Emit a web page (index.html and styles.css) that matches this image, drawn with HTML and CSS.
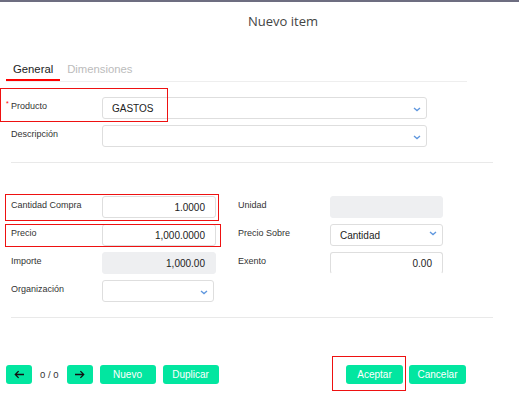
FILE: index.html
```html
<!DOCTYPE html>
<html lang="es">
<head>
<meta charset="utf-8">
<title>Nuevo item</title>
<link rel="stylesheet" href="styles.css">
</head>
<body>
<div class="modal">
  <div class="header"><span class="title">Nuevo item</span></div>

  <div class="tabs">
    <div class="tab active">General</div>
    <div class="tab">Dimensiones</div>
  </div>

  <div class="section top">
    <div class="row">
      <div class="label"><span class="req">*</span>Producto</div>
      <div class="input wide select"><span class="val">GASTOS</span>
        <svg class="chev" viewBox="0 0 8 5"><path d="M1 1 L4 3.6 L7 1" fill="none" stroke="#5f97de" stroke-width="1.3"/></svg>
      </div>
    </div>
    <div class="row">
      <div class="label">Descripción</div>
      <div class="input wide select">
        <svg class="chev" viewBox="0 0 8 5"><path d="M1 1 L4 3.6 L7 1" fill="none" stroke="#5f97de" stroke-width="1.3"/></svg>
      </div>
    </div>
  </div>

  <div class="divider"></div>

  <div class="grid">
    <div class="label">Cantidad Compra</div>
    <div class="input num">1.0000</div>
    <div class="label rlabel">Unidad</div>
    <div class="input disabled"></div>

    <div class="label">Precio</div>
    <div class="input num">1,000.0000</div>
    <div class="label rlabel">Precio Sobre</div>
    <div class="input select"><span class="val">Cantidad</span>
      <svg class="chev high" viewBox="0 0 8 5"><path d="M1 1 L4 3.6 L7 1" fill="none" stroke="#5f97de" stroke-width="1.3"/></svg>
    </div>

    <div class="label">Importe</div>
    <div class="input num disabled">1,000.00</div>
    <div class="label rlabel">Exento</div>
    <div class="input num open">0.00</div>

    <div class="label">Organización</div>
    <div class="input select org">
      <svg class="chev" viewBox="0 0 8 5"><path d="M1 1 L4 3.6 L7 1" fill="none" stroke="#5f97de" stroke-width="1.3"/></svg>
    </div>
  </div>

  <div class="divider lower"></div>

  <div class="footer">
    <div class="group">
      <button class="btn icon" type="button">
        <svg viewBox="0 0 12 10"><path d="M11 5 H1.5 M5 1.3 L1.3 5 L5 8.7" fill="none" stroke="#111" stroke-width="1.4"/></svg>
      </button>
      <span class="count">0 / 0</span>
      <button class="btn icon" type="button">
        <svg viewBox="0 0 12 10"><path d="M1 5 H10.5 M7 1.3 L10.7 5 L7 8.7" fill="none" stroke="#111" stroke-width="1.4"/></svg>
      </button>
      <button class="btn" type="button">Nuevo</button>
      <button class="btn" type="button">Duplicar</button>
    </div>
    <div class="group right">
      <button class="btn" type="button">Aceptar</button>
      <button class="btn" type="button">Cancelar</button>
    </div>
  </div>

  <div class="mark m1"></div>
  <div class="mark m2"></div>
  <div class="mark m3"></div>
  <div class="mark m4"></div>
</div>
</body>
</html>
```
FILE: styles.css
```css
* { box-sizing: border-box; }
html, body { margin: 0; padding: 0; background: #fff; }
body { font-family: "Liberation Sans", Arial, sans-serif; color: #333; }

.modal {
  position: relative;
  width: 519px;
  height: 401px;
  border-top: 2px solid #6d6d80;
  overflow: hidden;
}

.header {
  padding: 10px 0 0 47px;
  text-align: center;
  height: 30px;
}
.title {
  font-family: "Open Sans", sans-serif;
  font-size: 13px;
  line-height: 18px;
  color: #444;
}

.tabs {
  display: flex;
  margin: 30px 0 0 6px;
  width: 461px;
  border-bottom: 1px solid #eeeeee;
}
.tab {
  font-size: 11.3px;
  line-height: 14px;
  padding: 0 7px 3px;
  color: #bcbcbc;
  border-bottom: 2px solid transparent;
}
.tab.active {
  color: #222;
  border-bottom-color: #f00;
}

.section.top {
  margin-top: 15px;
  padding-left: 11px;
  display: flex;
  flex-direction: column;
  gap: 6px;
}
.row { display: flex; }
.label {
  width: 91px;
  font-size: 9px;
  line-height: 12px;
  padding-top: 3px;
  color: #333;
  white-space: nowrap;
}
.req {
  display: inline-block;
  width: 5px;
  margin-left: -5px;
  color: #f00;
  font-size: 7px;
  vertical-align: top;
  line-height: 7px;
}

.input {
  position: relative;
  height: 22px;
  border: 1px solid #dedede;
  border-radius: 3px;
  background: #fff;
  font-size: 10px;
  color: #222;
  display: flex;
  align-items: center;
  padding: 0 10px 0 9px;
}
.input.wide { width: 325px; }
.input.num { justify-content: flex-end; }
.input.disabled { background: #eeeff1; border-color: #eeeff1; }
.input.open { border-bottom-color: transparent; }
.input.org { width: 112px; }
.chev {
  position: absolute;
  right: 5px;
  top: 50%;
  width: 8px;
  height: 5px;
  margin-top: -1px;
}
.chev.high { top: 6px; margin-top: 0; }

.divider {
  margin: 15px 0 0 11px;
  width: 482px;
  height: 1px;
  background: #e9e9e9;
}

.grid {
  margin-top: 33px;
  padding-left: 11px;
  display: grid;
  grid-template-columns: 91px 114px 114px 113px;
  grid-auto-rows: 22px;
  row-gap: 6px;
}
.grid .rlabel { width: auto; margin-left: 22px; }

.footer {
  margin-top: 47px;
  display: flex;
  justify-content: space-between;
  padding: 0 53px 0 6px;
}
.group { display: flex; align-items: center; gap: 7px; }
.group.right { gap: 6px; }
.btn {
  height: 19px;
  width: 56px;
  border: none;
  border-radius: 3px;
  background: #02e6a0;
  color: #fff;
  font-family: "Liberation Sans", Arial, sans-serif;
  font-size: 10px;
  padding: 0;
  display: flex;
  align-items: center;
  justify-content: center;
}
.group.right .btn { width: 57px; }
.btn.icon { width: 26px; }
.btn.icon svg { width: 11px; height: 9px; }
.count { font-size: 9.5px; color: #333; margin: 0 1px; }

.mark {
  position: absolute;
  border: 1.5px solid #ee1111;
}
.m1 { left: 0; top: 86px; width: 168px; height: 34px; }
.m2 { left: 5px; top: 192px; width: 214px; height: 27px; }
.m3 { left: 5px; top: 222px; width: 216px; height: 23px; }
.m4 { left: 332px; top: 354px; width: 74px; height: 35px; }
```
